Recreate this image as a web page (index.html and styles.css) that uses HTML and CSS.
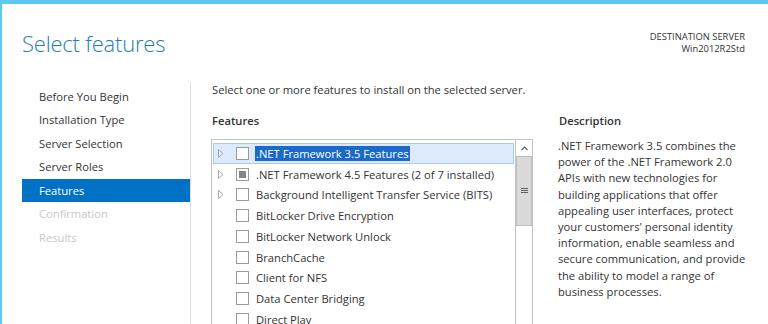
FILE: index.html
```html
<!DOCTYPE html>
<html>
<head>
<meta charset="utf-8">
<link rel="stylesheet" href="styles.css">
</head>
<body>
<div class="window">
  <header class="header">
    <h1 class="title">Select features</h1>
    <div class="dest">
      <div>DESTINATION SERVER</div>
      <div>Win2012R2Std</div>
    </div>
  </header>
  <div class="main">
    <nav class="nav">
      <div class="nav-item">Before You Begin</div>
      <div class="nav-item">Installation Type</div>
      <div class="nav-item">Server Selection</div>
      <div class="nav-item">Server Roles</div>
      <div class="nav-item active">Features</div>
      <div class="nav-item disabled">Confirmation</div>
      <div class="nav-item disabled">Results</div>
    </nav>
    <section class="content">
      <p class="intro">Select one or more features to install on the selected server.</p>
      <div class="panes">
        <div class="list-pane">
          <h2 class="heading">Features</h2>
          <div class="listbox">
            <div class="rows">
              <div class="row selected"><span class="exp"><svg width="6" height="9" viewBox="0 0 6 9"><path d="M0.5 0.5 L5 4.5 L0.5 8.5 Z" fill="none" stroke="#a8a8a8"/></svg></span><span class="cb"></span><span class="label">.NET Framework 3.5 Features</span></div>
              <div class="row"><span class="exp"><svg width="6" height="9" viewBox="0 0 6 9"><path d="M0.5 0.5 L5 4.5 L0.5 8.5 Z" fill="none" stroke="#a8a8a8"/></svg></span><span class="cb partial"></span><span class="label">.NET Framework 4.5 Features (2 of 7 installed)</span></div>
              <div class="row"><span class="exp"><svg width="6" height="9" viewBox="0 0 6 9"><path d="M0.5 0.5 L5 4.5 L0.5 8.5 Z" fill="none" stroke="#a8a8a8"/></svg></span><span class="cb"></span><span class="label">Background Intelligent Transfer Service (BITS)</span></div>
              <div class="row"><span class="exp"></span><span class="cb"></span><span class="label">BitLocker Drive Encryption</span></div>
              <div class="row"><span class="exp"></span><span class="cb"></span><span class="label">BitLocker Network Unlock</span></div>
              <div class="row"><span class="exp"></span><span class="cb"></span><span class="label">BranchCache</span></div>
              <div class="row"><span class="exp"></span><span class="cb"></span><span class="label">Client for NFS</span></div>
              <div class="row"><span class="exp"></span><span class="cb"></span><span class="label">Data Center Bridging</span></div>
              <div class="row"><span class="exp"></span><span class="cb"></span><span class="label">Direct Play</span></div>
            </div>
            <div class="scrollbar">
              <div class="sb-up"><svg width="7" height="5" viewBox="0 0 7 5"><path d="M0.5 4 L3.5 1 L6.5 4" fill="none" stroke="#606060" stroke-width="1.2"/></svg></div>
              <div class="sb-thumb"><svg width="7" height="6" viewBox="0 0 7 6"><path d="M0 0.5 H7 M0 2.5 H7 M0 4.5 H7" stroke="#606060" stroke-width="1"/></svg></div>
            </div>
          </div>
        </div>
        <div class="desc-pane">
          <h2 class="heading">Description</h2>
          <p class="desc">.NET Framework 3.5 combines the power of the .NET Framework 2.0 APIs with new technologies for building applications that offer appealing user interfaces, protect your customers' personal identity information, enable seamless and secure communication, and provide the ability to model a range of business processes.</p>
        </div>
      </div>
    </section>
  </div>
</div>
</body>
</html>
```
FILE: styles.css
```css
* { box-sizing: border-box; }
html, body { margin: 0; padding: 0; }
body {
  width: 768px;
  height: 324px;
  overflow: hidden;
  background: #fff;
  font-family: "Segoe UI", "Open Sans", "Noto Sans", sans-serif;
  font-size: 11.2px;
  color: #333;
}
.window {
  height: 324px;
  border-top: 4px solid #5ec8f0;
  border-left: 2px solid #5ec8f0;
  overflow: hidden;
}
.header {
  height: 78px;
  display: flex;
  justify-content: space-between;
  align-items: flex-start;
  padding: 0 23px 0 20px;
}
.title {
  margin: 24px 0 0 0;
  font-weight: 300;
  font-size: 22px;
  line-height: 30px;
  color: #1f80ab;
  letter-spacing: -0.2px;
}
.dest {
  margin-top: 27px;
  text-align: right;
  font-size: 9.4px;
  line-height: 12px;
  color: #333;
}
.main {
  display: flex;
  height: 242px;
}
.nav {
  width: 169px;
  margin-left: 20px;
  padding-top: 2.5px;
  border-right: 1px solid #dcdcdc;
}
.nav-item {
  height: 23.5px;
  line-height: 23.5px;
  padding-left: 17px;
  width: 168px;
  white-space: nowrap;
}
.nav-item.active {
  background: #0072c6;
  color: #fff;
}
.nav-item.disabled { color: #c8c8c8; }
.content {
  flex: 1;
  padding-left: 20px;
}
.intro {
  margin: 0 0 15px 1px;
  line-height: 16px;
}
.panes {
  display: flex;
}
.list-pane { width: 322px; }
.heading {
  margin: 0 0 10px 1px;
  font-size: 11.2px;
  font-weight: 600;
  line-height: 16px;
  color: #333;
}
.desc-pane {
  margin-left: 25px;
  width: 196px;
}
.desc-pane .heading { margin-bottom: 9px; }
.desc {
  margin: 0;
  line-height: 16.2px;
}
.listbox {
  height: 200px;
  border: 1px solid #c3c3c3;
  display: flex;
}
.rows {
  flex: 1;
  padding: 3px 1px 0 1px;
}
.row {
  height: 20.75px;
  display: flex;
  align-items: center;
  white-space: nowrap;
  border: 1px solid transparent;
}
.row.selected {
  background: #dcebfc;
  border-color: #a9cbee;
}
.exp {
  width: 22px;
  padding-left: 4px;
  display: flex;
  align-items: center;
}
.cb {
  width: 13px;
  height: 13px;
  border: 1px solid #9a9a9a;
  background: #fff;
  margin-right: 6px;
  position: relative;
}
.cb.partial::after {
  content: "";
  position: absolute;
  left: 2px; top: 2px;
  width: 7px; height: 7px;
  background: #858585;
}
.label { padding: 0 1px; line-height: 15px; }
.row.selected .label {
  background: #1b6ac9;
  color: #fff;
}
.scrollbar {
  width: 17px;
  border-left: 1px solid #c3c3c3;
  display: flex;
  flex-direction: column;
}
.sb-up {
  height: 16px;
  display: flex;
  align-items: center;
  justify-content: center;
}
.sb-thumb {
  height: 70px;
  background: #dadada;
  border: 1px solid #c0c0c0;
  display: flex;
  align-items: center;
  justify-content: center;
}
```
